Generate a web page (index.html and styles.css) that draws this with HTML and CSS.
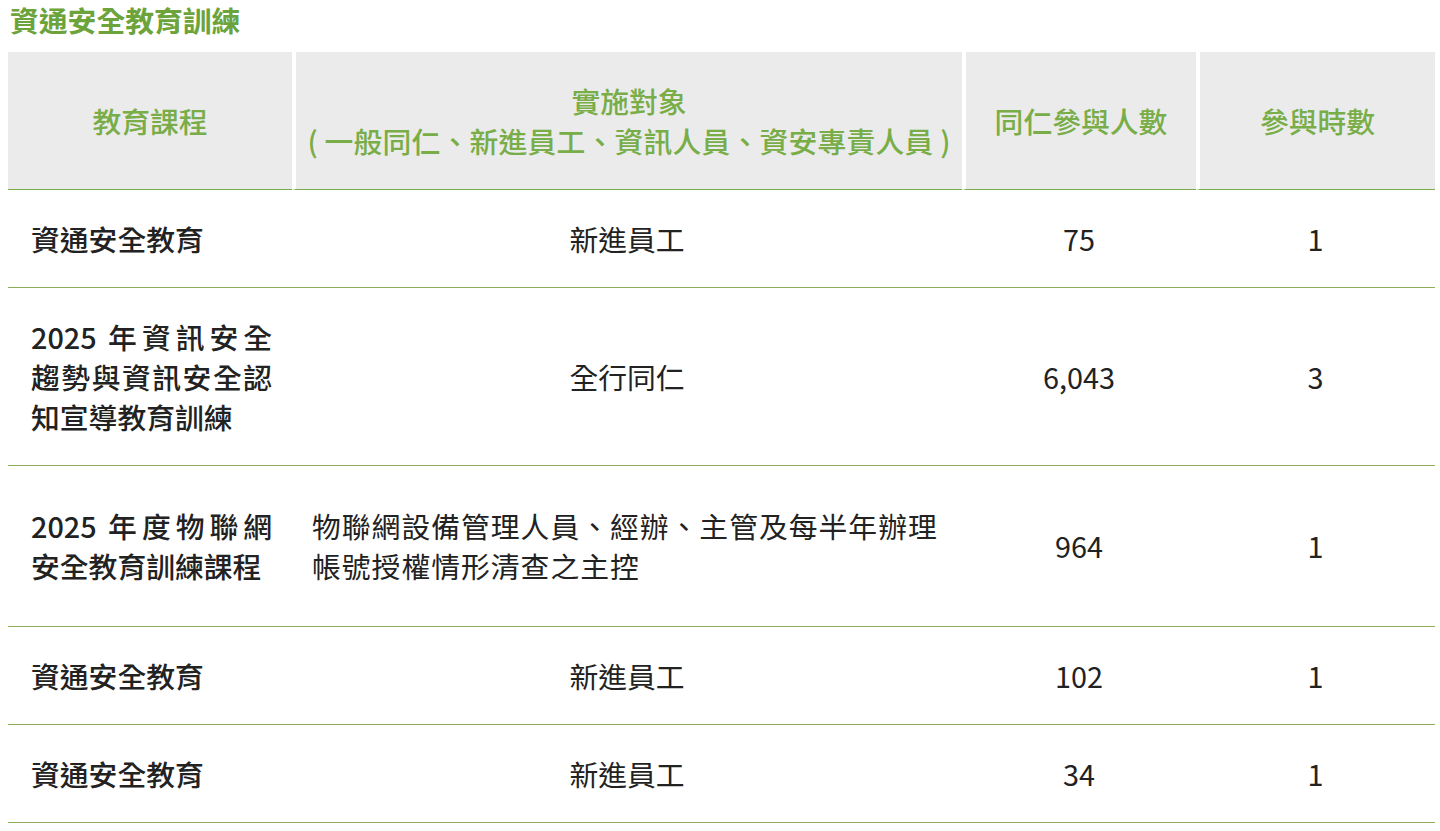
FILE: index.html
```html
<!DOCTYPE html>
<html lang="zh-Hant">
<head>
<meta charset="utf-8">
<title>資通安全教育訓練</title>
<link rel="stylesheet" href="styles.css">
</head>
<body>
<div class="page">
  <h2 class="title">資通安全教育訓練</h2>
  <table class="edu">
    <colgroup>
      <col class="c1"><col class="c2"><col class="c3"><col class="c4">
    </colgroup>
    <thead>
      <tr>
        <th>教育課程</th>
        <th class="sep">實施對象<br><span class="nowrap">( 一般同仁、新進員工、資訊人員、資安專責人員 )</span></th>
        <th class="sep">同仁參與人數</th>
        <th class="sep">參與時數</th>
      </tr>
    </thead>
    <tbody>
      <tr>
        <td class="course">資通安全教育</td>
        <td class="ctr">新進員工</td>
        <td class="ctr">75</td>
        <td class="ctr">1</td>
      </tr>
      <tr>
        <td class="course">2025 年資訊安全趨勢與資訊安全認知宣導教育訓練</td>
        <td class="ctr">全行同仁</td>
        <td class="ctr">6,043</td>
        <td class="ctr">3</td>
      </tr>
      <tr class="tall">
        <td class="course">2025 年度物聯網安全教育訓練課程</td>
        <td class="left">物聯網設備管理人員、經辦、主管及每半年辦理帳號授權情形清查之主控</td>
        <td class="ctr">964</td>
        <td class="ctr">1</td>
      </tr>
      <tr>
        <td class="course">資通安全教育</td>
        <td class="ctr">新進員工</td>
        <td class="ctr">102</td>
        <td class="ctr">1</td>
      </tr>
      <tr>
        <td class="course">資通安全教育</td>
        <td class="ctr">新進員工</td>
        <td class="ctr">34</td>
        <td class="ctr">1</td>
      </tr>
    </tbody>
  </table>
</div>
</body>
</html>
```

FILE: styles.css
```css
html, body {
  margin: 0;
  padding: 0;
  background: #ffffff;
}

body {
  font-family: "Noto Sans CJK TC", "Noto Sans", sans-serif;
  color: #222222;
}

.page {
  padding: 0 0 0 8px;
}

.title {
  margin: 0 0 12px 2px;
  font-size: 28.8px;
  line-height: 40px;
  height: 40px;
  font-weight: 700;
  color: #6ca33a;
}

.edu {
  width: 1427px;
  table-layout: fixed;
  border-collapse: separate;
  border-spacing: 0;
  font-size: 28.8px;
  line-height: 40px;
}

.c1 { width: 284px; }
.c2 { width: 670px; }
.c3 { width: 234px; }
.c4 { width: 239px; }

.edu th {
  background: #ebebeb;
  background-clip: padding-box;
  color: #78ad48;
  font-weight: 500;
  text-align: center;
  vertical-align: middle;
  padding: 29px 4px 28px 4px;
  border-bottom: 1px solid #79ad4a;
}

.edu th.sep {
  border-left: 4px solid #ffffff;
}

.nowrap {
  white-space: nowrap;
  letter-spacing: 0.2px;
}

.edu td {
  padding: 29px 20px 28px 20px;
  border-bottom: 1px solid #8fae5c;
  vertical-align: middle;
  font-weight: 400;
}

.edu tr.tall td {
  padding-top: 40px;
  padding-bottom: 40px;
}

.edu td.course {
  padding-left: 23px;
  padding-right: 20px;
  text-align: justify;
  text-justify: inter-character;
  font-weight: 500;
}

.edu td.ctr {
  text-align: center;
}

.edu td.left {
  text-align: left;
  padding-left: 20px;
  padding-right: 10px;
  letter-spacing: 1px;
}
```
